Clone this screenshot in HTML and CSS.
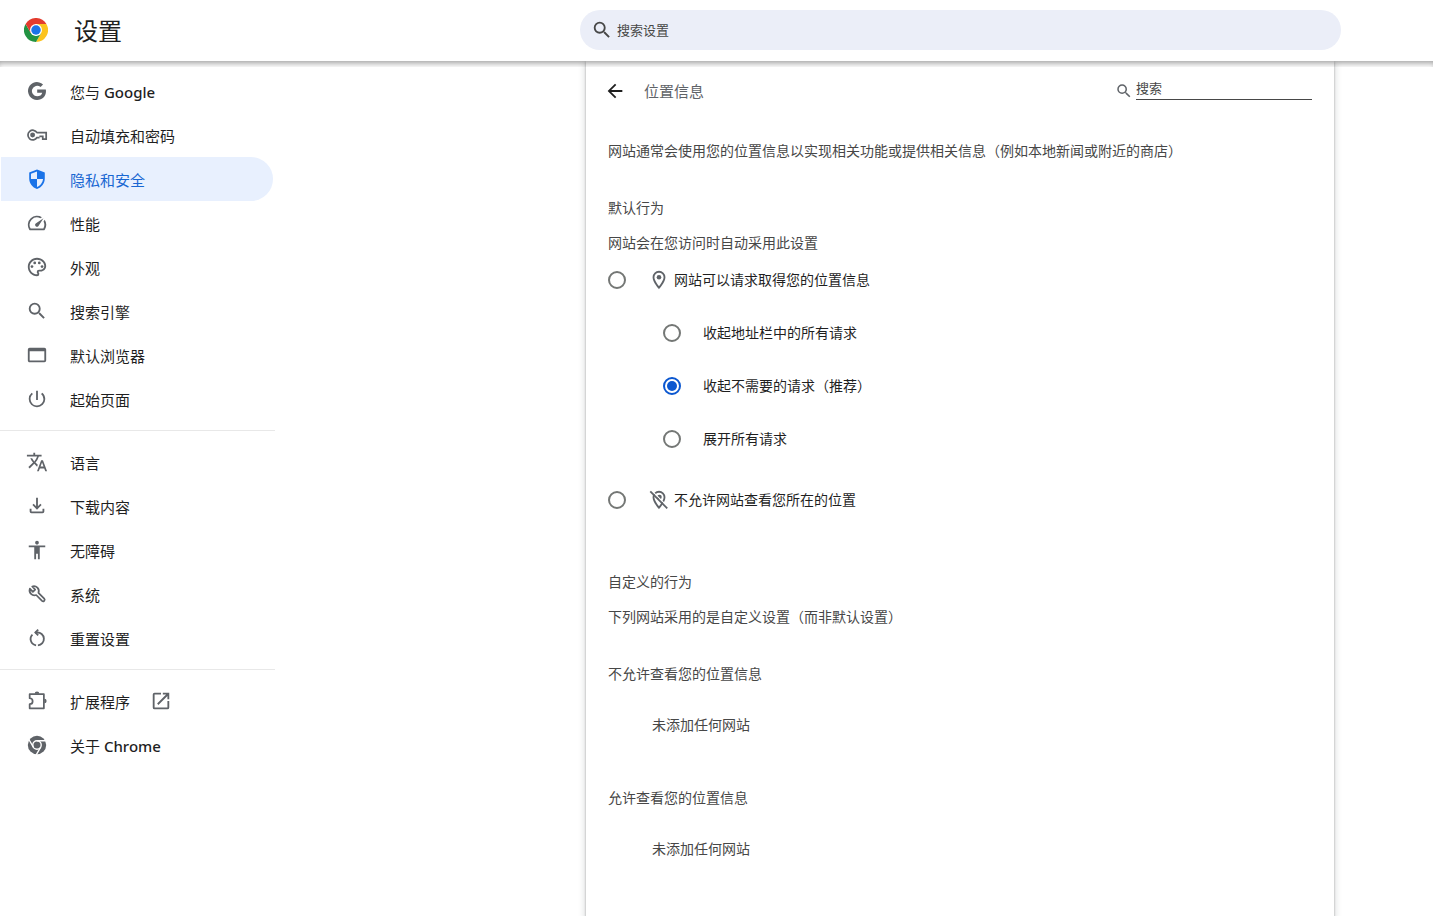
FILE: index.html
```html
<!DOCTYPE html>
<html lang="zh-CN">
<head>
<meta charset="utf-8">
<meta name="viewport" content="width=device-width, initial-scale=1">
<title>设置 - 位置信息</title>
<link rel="stylesheet" href="styles.css">
</head>
<body>
<header class="toolbar">
  <div class="brand">
    <svg class="logo" viewBox="0 0 48 48" aria-hidden="true">
      <path fill="#fcc31e" d="M24 12h20.8A24 24 0 0 1 24 48L34.4 30Z"/>
      <path fill="#229342" d="M3.2 12A24 24 0 0 0 24 48L34.4 30 24 36 13.6 30Z"/>
      <path fill="#e33b2e" d="M3.2 12A24 24 0 0 1 44.8 12H24L13.6 30Z"/>
      <circle cx="24" cy="24" r="12" fill="#fff"/>
      <circle cx="24" cy="24" r="9.5" fill="#1a73e8"/>
    </svg>
    <h1 class="brand-title">设置</h1>
  </div>
  <label class="search">
    <svg class="icon" viewBox="0 0 24 24" aria-hidden="true"><path d="M15.5 14h-.79l-.28-.27A6.47 6.47 0 0 0 16 9.5 6.5 6.5 0 1 0 9.5 16c1.61 0 3.09-.59 4.23-1.57l.27.28v.79l5 4.99L20.49 19l-4.99-5zm-6 0C7.01 14 5 11.99 5 9.5S7.01 5 9.5 5 14 7.01 14 9.5 11.99 14 9.5 14z"/></svg>
    <input class="search-input" type="search" placeholder="搜索设置" aria-label="搜索设置">
  </label>
</header>

<div class="layout">
  <nav class="sidebar" aria-label="设置">
    <a class="nav-item" href="#people"><svg class="icon" viewBox="0 0 24 24" aria-hidden="true"><path d="M21.6 10.3H12.2v3.5h5.5c-.5 2.500-2.700 3.900-5.500 3.900a5.700 5.700 0 1 1 3.700-10l2.700-2.700A9.700 9.700 0 1 0 12.200 21.700c5.600 0 9.600-3.900 9.600-9.500 0-.7-.1-1.300-.2-1.900z"/></svg><span class="label">您与 <span class="latin">Google</span></span></a>
    <a class="nav-item" href="#autofill"><svg class="icon" viewBox="0 0 24 24" aria-hidden="true"><path fill="none" stroke="currentColor" stroke-width="1.9" d="M12 9.400A5.300 5.300 0 1 0 12 14.800H14.800M11.500 9.400H22V16.500H18.300V13.400H14.600"/><circle cx="7.200" cy="12" r="2.700"/></svg><span class="label">自动填充和密码</span></a>
    <a class="nav-item selected" href="#privacy" aria-current="page"><svg class="icon" viewBox="0 0 24 24" aria-hidden="true"><path d="M12 1.500 3.500 5v6.500c0 5.300 3.600 10 8.500 11.300 4.900-1.300 8.500-6 8.500-11.300V5zm0 2.200V12h6.600c-.5 4-3.100 7.500-6.600 8.700V12H5.400V6.300z"/></svg><span class="label">隐私和安全</span></a>
    <a class="nav-item" href="#performance"><svg class="icon" viewBox="0 0 24 24" aria-hidden="true"><path d="m20.380 8.570-1.230 1.850a8 8 0 0 1-.22 7.580H5.070A8 8 0 0 1 15.580 6.850l1.850-1.230A10 10 0 0 0 3.350 19a2 2 0 0 0 1.720 1h13.850a2 2 0 0 0 1.740-1 10 10 0 0 0-.27-10.440zm-9.790 6.840a2 2 0 0 0 2.830 0l5.660-8.490-8.490 5.660a2 2 0 0 0 0 2.830z"/></svg><span class="label">性能</span></a>
    <a class="nav-item" href="#appearance"><svg class="icon" viewBox="0 0 24 24" aria-hidden="true"><path d="M12 22C6.490 22 2 17.510 2 12S6.490 2 12 2s10 4.040 10 9c0 3.310-2.690 6-6 6h-1.770c-.28 0-.5.22-.5.5 0 .12.05.23.13.33.41.47.64 1.060.64 1.670A2.500 2.500 0 0 1 12 22zm0-18c-4.410 0-8 3.590-8 8s3.590 8 8 8c.28 0 .5-.22.5-.5a.54.54 0 0 0-.14-.35c-.41-.46-.63-1.050-.63-1.650a2.500 2.500 0 0 1 2.500-2.500H16c2.210 0 4-1.790 4-4 0-3.860-3.590-7-8-7z"/><circle cx="6.500" cy="11.500" r="1.500"/><circle cx="9.500" cy="7.500" r="1.500"/><circle cx="14.500" cy="7.500" r="1.500"/><circle cx="17.500" cy="11.500" r="1.500"/></svg><span class="label">外观</span></a>
    <a class="nav-item" href="#search"><svg class="icon" viewBox="0 0 24 24" aria-hidden="true"><path d="M15.5 14h-.79l-.28-.27A6.47 6.47 0 0 0 16 9.5 6.5 6.5 0 1 0 9.5 16c1.61 0 3.09-.59 4.23-1.57l.27.28v.79l5 4.99L20.49 19l-4.99-5zm-6 0C7.01 14 5 11.99 5 9.5S7.01 5 9.5 5 14 7.01 14 9.5 11.99 14 9.5 14z"/></svg><span class="label">搜索引擎</span></a>
    <a class="nav-item" href="#browser"><svg class="icon" viewBox="0 0 24 24" aria-hidden="true"><path d="M20 4H4a2 2 0 0 0-2 2v12c0 1.100.9 2 2 2h16a2 2 0 0 0 2-2V6a2 2 0 0 0-2-2zm0 14H4V8h16z"/></svg><span class="label">默认浏览器</span></a>
    <a class="nav-item" href="#startup"><svg class="icon" viewBox="0 0 24 24" aria-hidden="true"><path d="M13 3h-2v10h2zm4.830 2.170-1.420 1.420A6.920 6.920 0 0 1 19 12c0 3.870-3.130 7-7 7A6.995 6.995 0 0 1 7.580 6.580L6.170 5.170A8.932 8.932 0 0 0 3 12a9 9 0 0 0 18 0c0-2.740-1.230-5.180-3.170-6.830z"/></svg><span class="label">起始页面</span></a>
    <hr class="divider">
    <a class="nav-item" href="#languages"><svg class="icon" viewBox="0 0 24 24" aria-hidden="true"><path d="m12.870 15.070-2.540-2.510.03-.03A17.520 17.520 0 0 0 14.070 6H17V4h-7V2H8v2H1v1.990h11.170C11.500 7.920 10.440 9.750 9 11.350 8.070 10.320 7.300 9.190 6.690 8h-2c.73 1.630 1.730 3.170 2.980 4.560l-5.090 5.020L4 19l5-5 3.110 3.110zM18.500 10h-2L12 22h2l1.120-3h4.750L21 22h2zm-2.620 7 1.620-4.330L19.120 17z"/></svg><span class="label">语言</span></a>
    <a class="nav-item" href="#downloads"><svg class="icon" viewBox="0 0 24 24" aria-hidden="true"><path d="m12 16-5-5 1.400-1.450 2.600 2.600V3h2v9.150l2.600-2.600L17 11zm-6 4a2 2 0 0 1-2-2v-3h2v3h12v-3h2v3a2 2 0 0 1-2 2z"/></svg><span class="label">下载内容</span></a>
    <a class="nav-item" href="#accessibility"><svg class="icon" viewBox="0 0 24 24" aria-hidden="true"><path d="M12 2c1.100 0 2 .9 2 2s-.9 2-2 2-2-.9-2-2 .9-2 2-2zm9 7h-6v13h-2v-6h-2v6H9V9H3V7h18z"/></svg><span class="label">无障碍</span></a>
    <a class="nav-item" href="#system"><svg class="icon" viewBox="0 0 24 24" aria-hidden="true"><path fill="none" stroke="currentColor" stroke-width="1.900" stroke-linejoin="round" d="M4.200 6.200a5.400 5.400 0 0 0 6.900 6.900l6.400 6.400a1.700 1.700 0 0 0 2.400-2.400l-6.300-6.300A5.400 5.400 0 0 0 6.800 3.800L10 7.200 7.500 9.700z"/></svg><span class="label">系统</span></a>
    <a class="nav-item" href="#reset"><svg class="icon" viewBox="0 0 24 24" aria-hidden="true"><path fill="none" stroke="currentColor" stroke-width="2" d="M11 20A7 7 0 0 1 7 8.200M13 20A7 7 0 0 0 12 6H10"/><path d="M12.600 2.200 8.800 6l3.800 3.800 1.400-1.400L11.600 6 14 3.600z"/></svg><span class="label">重置设置</span></a>
    <hr class="divider">
    <a class="nav-item" href="#extensions"><svg class="icon" viewBox="0 0 24 24" aria-hidden="true"><path fill="none" stroke="currentColor" stroke-width="1.900" stroke-linejoin="round" d="M4 4.500h15.500v15.500H4v-4.500a3.200 3.200 0 0 0 0-6.500z"/><path d="M9.500 4a2.500 2.500 0 0 1 5 0zM20 9.500a2.500 2.500 0 0 1 0 5z"/></svg><span class="label">扩展程序</span><svg class="icon external" viewBox="0 0 24 24" aria-hidden="true"><path d="M19 19H5V5h7V3H5a2 2 0 0 0-2 2v14a2 2 0 0 0 2 2h14a2 2 0 0 0 2-2v-7h-2zM14 3v2h3.590l-9.830 9.830 1.410 1.410L19 6.410V10h2V3z"/></svg></a>
    <a class="nav-item" href="#about"><svg class="icon" viewBox="0 0 24 24" aria-hidden="true"><circle cx="12" cy="12" r="10"/><g fill="none" stroke="#fff" stroke-width="1.500"><circle cx="12" cy="12" r="4.600"/><path d="M12 7.400h10M8 14.300 3 5.700M16 14.300 11 23"/></g></svg><span class="label">关于 <span class="latin">Chrome</span></span></a>
  </nav>

  <main class="card">
    <div class="page-head">
      <button class="back" type="button" aria-label="返回"><svg class="icon" viewBox="0 0 24 24" aria-hidden="true"><path d="M20 11H7.830l5.590-5.590L12 4l-8 8 8 8 1.410-1.410L7.830 13H20z"/></svg></button>
      <h2 class="page-title">位置信息</h2>
      <label class="filter">
        <svg class="icon" viewBox="0 0 24 24" aria-hidden="true"><path d="M15.5 14h-.79l-.28-.27A6.47 6.47 0 0 0 16 9.5 6.5 6.5 0 1 0 9.5 16c1.61 0 3.09-.59 4.23-1.57l.27.28v.79l5 4.99L20.49 19l-4.99-5zm-6 0C7.01 14 5 11.99 5 9.5S7.01 5 9.5 5 14 7.01 14 9.5 11.99 14 9.5 14z"/></svg>
        <input class="filter-input" type="search" placeholder="搜索" aria-label="搜索">
      </label>
    </div>

    <p class="intro">网站通常会使用您的位置信息以实现相关功能或提供相关信息（例如本地新闻或附近的商店）</p>

    <section class="section">
      <h3 class="heading">默认行为</h3>
      <p class="subtitle" id="default-note">网站会在您访问时自动采用此设置</p>
      <div class="options" role="radiogroup" aria-labelledby="default-note">
        <label class="option"><input class="radio" type="radio" name="location"><svg class="icon pin" viewBox="0 0 24 24" aria-hidden="true"><path d="M12 2a7 7 0 0 0-7 7c0 5.250 7 13 7 13s7-7.750 7-13a7 7 0 0 0-7-7zM7 9a5 5 0 0 1 10 0c0 2.880-2.880 7.190-5 9.880C9.920 16.210 7 11.850 7 9z"/><circle cx="12" cy="9" r="2.500"/></svg><span>网站可以请求取得您的位置信息</span></label>
        <div class="options suboptions" role="radiogroup" aria-label="请求方式">
          <label class="option"><input class="radio" type="radio" name="request"><span>收起地址栏中的所有请求</span></label>
          <label class="option"><input class="radio" type="radio" name="request" checked><span>收起不需要的请求（推荐）</span></label>
          <label class="option"><input class="radio" type="radio" name="request"><span>展开所有请求</span></label>
        </div>
        <label class="option"><input class="radio" type="radio" name="location"><svg class="icon pin" viewBox="0 0 24 24" aria-hidden="true"><path d="M12 2a7 7 0 0 0-7 7c0 5.250 7 13 7 13s7-7.750 7-13a7 7 0 0 0-7-7zM7 9a5 5 0 0 1 10 0c0 2.880-2.880 7.190-5 9.880C9.920 16.210 7 11.850 7 9z"/><circle cx="12.500" cy="8.800" r="2.500"/><path fill="none" stroke="#fff" stroke-width="1.200" d="M4.100 1.900 22.600 20.400"/><path fill="none" stroke="currentColor" stroke-width="2" d="M2.500 2.700 21 21.200"/></svg><span>不允许网站查看您所在的位置</span></label>
      </div>
    </section>

    <section class="section custom">
      <h3 class="heading">自定义的行为</h3>
      <p class="subtitle">下列网站采用的是自定义设置（而非默认设置）</p>
      <h4 class="heading list-heading">不允许查看您的位置信息</h4>
      <p class="empty">未添加任何网站</p>
      <h4 class="heading list-heading allowed">允许查看您的位置信息</h4>
      <p class="empty">未添加任何网站</p>
    </section>
  </main>
</div>
</body>
</html>
```

FILE: styles.css
```css
* {
  box-sizing: border-box;
}

body {
  display: flex;
  flex-direction: column;
  min-height: 100vh;
  margin: 0;
  background: #fff;
  color: #1f1f1f;
  font: 14px/22px "Noto Sans", "Noto Sans CJK SC", sans-serif;
}

h1, h2, h3, h4, p {
  margin: 0;
  font-weight: 400;
}

input, button {
  font: inherit;
}

.icon {
  flex: none;
  width: 22px;
  height: 22px;
  fill: currentColor;
  color: #5f6368;
}

.toolbar {
  position: sticky;
  top: 0;
  z-index: 1;
  display: grid;
  grid-template-columns: minmax(275px, 1fr) minmax(0, 761px) 92px;
  align-items: center;
  height: 61px;
  padding-bottom: 1px;
  background: #fff;
}

.toolbar::after {
  content: "";
  position: absolute;
  top: 100%;
  left: 0;
  right: 0;
  height: 6px;
  box-shadow: inset 0 5px 6px -3px rgba(0, 0, 0, .4);
  pointer-events: none;
}

.brand {
  display: flex;
  align-items: center;
  gap: 26px;
  padding-left: 24px;
}

.logo {
  width: 24px;
  height: 24px;
}

.brand-title {
  padding-top: 2px;
  font-size: 24px;
  line-height: 32px;
}

.search {
  display: flex;
  align-items: center;
  gap: 4px;
  height: 40px;
  padding: 0 20px 0 11px;
  border-radius: 20px;
  background: #ebeef8;
}

.search .icon {
  color: #474747;
}

.search-input {
  flex: 1;
  min-width: 0;
  padding: 0;
  border: 0;
  outline: 0;
  background: none;
  appearance: none;
  font-size: 13px;
}

::placeholder {
  color: #474747;
  opacity: 1;
}

.layout {
  flex: 1;
  display: grid;
  grid-template-columns: minmax(275px, 1fr) minmax(0, 748px) 99px;
}

.sidebar {
  width: 275px;
  padding-top: 8px;
}

.nav-item {
  display: flex;
  align-items: center;
  height: 44px;
  margin: 0 2px 0 1px;
  padding-left: 25px;
  border-radius: 0 22px 22px 0;
  color: #1f1f1f;
  font-size: 15px;
  text-decoration: none;
}

.label {
  padding: 1px 0 0 22px;
}

.latin {
  font-weight: 500;
}

.nav-item.selected {
  background: #e8f0fe;
  color: #1967d2;
}

.nav-item.selected .icon {
  color: #1a73e8;
}

.nav-item .external {
  margin-left: 20px;
}

.divider {
  height: 1px;
  margin: 9px 0;
  border: 0;
  background: #e8e8e8;
}

.card {
  padding: 0 22px 57px;
  background: #fff;
  box-shadow: 0 1px 2px rgba(60, 64, 67, .4), 0 2px 6px 2px rgba(60, 64, 67, .15);
}

.page-head {
  display: flex;
  align-items: center;
  height: 60px;
}

.back {
  display: flex;
  margin-left: -4px;
  padding: 0;
  border: 0;
  background: none;
}

.back .icon {
  color: #1f1f1f;
}

.page-title {
  flex: 1;
  padding-left: 18px;
  color: #5f6368;
  font-size: 15px;
}

.filter {
  display: flex;
  align-items: center;
  gap: 3px;
}

.filter .icon {
  width: 18px;
  height: 18px;
}

.filter-input {
  width: 176px;
  height: 22px;
  margin-bottom: 4px;
  padding: 0 0 2px;
  border: 0;
  border-bottom: 1px solid #474747;
  border-radius: 0;
  outline: 0;
  background: none;
  appearance: none;
  font-size: 13px;
}

.intro {
  margin-top: 19px;
}

.intro, .heading, .subtitle, .empty {
  color: #474747;
}

.section {
  margin-top: 35px;
}

.custom {
  margin-top: 45px;
}

.heading {
  font-size: 14px;
}

.subtitle {
  margin-top: 13px;
}

.options {
  display: flex;
  flex-direction: column;
  gap: 1px;
}

.option {
  display: flex;
  align-items: center;
  height: 52px;
}

.radio {
  flex: none;
  display: grid;
  place-items: center;
  width: 18px;
  height: 18px;
  margin: 0 22px 0 0;
  border: 2px solid #747775;
  border-radius: 50%;
  appearance: none;
}

.radio:checked {
  border-color: #0b57d0;
}

.radio:checked::before {
  content: "";
  width: 10px;
  height: 10px;
  border-radius: 50%;
  background: #0b57d0;
}

.pin {
  margin-right: 4px;
}

.suboptions {
  margin: 0 0 8px 55px;
}

.list-heading {
  margin-top: 35px;
}

.allowed {
  margin-top: 51px;
}

.empty {
  margin-top: 29px;
  padding-left: 44px;
}
```
